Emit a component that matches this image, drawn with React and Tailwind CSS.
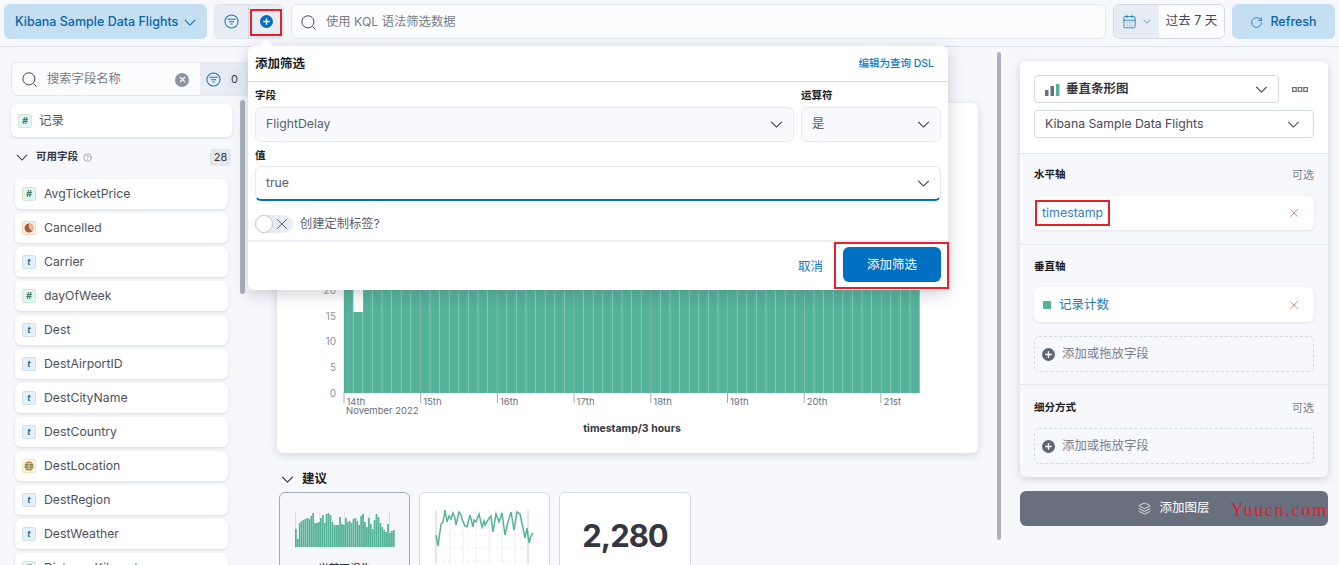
import React from "react"
import { RotateCw, CalendarDays, Layers, CircleHelp, X } from "lucide-react"

const font = { fontFamily: '"Inter", "Noto Sans CJK SC", sans-serif' }

const fields = [
  ["num", "AvgTicketPrice"],
  ["bool", "Cancelled"],
  ["text", "Carrier"],
  ["num", "dayOfWeek"],
  ["text", "Dest"],
  ["text", "DestAirportID"],
  ["text", "DestCityName"],
  ["text", "DestCountry"],
  ["geo", "DestLocation"],
  ["text", "DestRegion"],
  ["text", "DestWeather"],
  ["num", "DistanceKilometers"],
]

const thumbBars = [18, 8, 24, 26, 27, 28, 29, 28, 31, 34, 24, 24, 25, 29, 32, 24, 33, 34, 32, 25, 22, 22, 22, 30, 23, 22, 29, 25, 26, 24, 28, 29, 26, 22, 31, 33, 25, 20, 29, 23, 18, 27, 33, 30, 24, 20, 17, 15, 23, 14, 16, 17]
const linePts = [[436, 535], [438, 546], [441, 524], [443, 522], [445, 510], [447, 522], [449, 516], [451, 519], [453, 513], [455, 518], [456, 525], [458, 516], [459, 512], [461, 515], [462, 519], [465, 526], [467, 527], [470, 515], [473, 527], [474, 520], [476, 522], [479, 514], [482, 527], [484, 521], [485, 525], [488, 520], [491, 516], [493, 532], [496, 514], [499, 522], [502, 513], [505, 535], [508, 522], [511, 512], [514, 530], [517, 512], [520, 514], [523, 528], [525, 538], [527, 528], [529, 543], [531, 536], [533, 533]]

function Chev({ className }) {
  return (
    <svg viewBox="0 0 14 8" fill="none" stroke="currentColor" strokeWidth="1.2" className={className}>
      <path d="M1 1l6 6 6-6" />
    </svg>
  )
}

function FilterIcon({ className }) {
  return (
    <svg viewBox="0 0 16 16" fill="none" stroke="currentColor" className={className}>
      <circle cx="8" cy="8" r="7" strokeWidth="1.1" />
      <path d="M3.6 5.7h8.8M5.3 8.2h5.4M6.9 10.7h2.2" strokeWidth="1.1" />
    </svg>
  )
}

function SearchIcon() {
  return (
    <svg viewBox="0 0 16 16" fill="none" stroke="#343741" strokeWidth="1" className="w-[15px] h-[15px] shrink-0">
      <path d="M11.6 12.1A6.4 6.4 0 1 1 12.2 11.5" />
      <path d="M12.2 12.2L15.5 15.5" />
    </svg>
  )
}

function PlusCircle({ className, color }) {
  return (
    <svg viewBox="0 0 14 14" className={className}>
      <circle cx="7" cy="7" r="7" fill={color} />
      <path d="M7 3.5v7M3.5 7h7" stroke="#fff" strokeWidth="1.5" />
    </svg>
  )
}

function TypeBadge({ type }) {
  if (type === "num") {
    return <span className="w-[14px] h-[14px] shrink-0 rounded-[2px] bg-[#e6f3ef] border border-[#cfe8df] flex items-center justify-center text-[9px] font-bold italic text-[#2f7e68]">#</span>
  }
  if (type === "bool") {
    return (
      <span className="w-[14px] h-[14px] shrink-0 rounded-[2px] bg-[#fbeee5] border border-[#f4d9c6] flex items-center justify-center">
        <svg viewBox="0 0 10 10" className="w-[10px] h-[10px]">
          <circle cx="5" cy="5" r="4.5" fill="#a5612f" />
          <path d="M8.2 1.8A4.5 4.5 0 0 1 5 9.5 L5 5 Z" fill="#e2bb9c" transform="rotate(-45 5 5)" />
        </svg>
      </span>
    )
  }
  if (type === "geo") {
    return (
      <span className="w-[14px] h-[14px] shrink-0 rounded-[2px] bg-[#fbf5df] border border-[#f3e8bd] flex items-center justify-center">
        <svg viewBox="0 0 10 10" className="w-[10px] h-[10px]">
          <circle cx="5" cy="5" r="4.5" fill="#8a7a3a" />
          <path d="M0.5 5h9M5 .5v9M1.5 2.6h7M1.5 7.4h7" stroke="#f3e8bd" strokeWidth=".7" />
        </svg>
      </span>
    )
  }
  return <span className="w-[14px] h-[14px] shrink-0 rounded-[2px] bg-[#e6f0f8] border border-[#cfe0ef] flex items-center justify-center text-[9px] font-bold italic text-[#356a94]">t</span>
}

function Chart() {
  const bars = Array.from({ length: 60 }, (_, i) => i)
  const days = ["14th", "15th", "16th", "17th", "18th", "19th", "20th", "21st"]
  const yLabels = [[0, 290], [5, 264], [10, 238], [15, 213], [20, 187]]
  return (
    <svg viewBox="0 0 701 350" className="w-[701px] h-[350px] block">
      <rect x={67} y={150} width={576} height={59} fill="#54b399" fillOpacity={0.6} />
      <rect x={67} y={209} width={576} height={81} fill="#54b399" fillOpacity={0.6} />
      <rect x={76.6} y={150} width={9.6} height={59} fill="#fff" />
      {bars.map(i => (
        <rect key={i} x={67 + i * 9.6} y={i === 1 ? 209 : 150} width={8.8} height={i === 1 ? 81 : 140} fill="#54b399" />
      ))}
      {days.map((d, i) => (
        <g key={d}>
          <line x1={67 + i * 76.7} x2={67 + i * 76.7} y1={150} y2={290} stroke="#69707d" strokeOpacity={0.25} />
          <line x1={67 + i * 76.7} x2={67 + i * 76.7} y1={290} y2={300} stroke="#a5abb6" />
          <text x={69.5 + i * 76.7} y={302} fontSize="9.5" fill="#69707d">{d}</text>
        </g>
      ))}
      <text x={69} y={311} fontSize="9.5" fill="#69707d">November 2022</text>
      {yLabels.map(([v, y]) => (
        <text key={v} x={59} y={y + 3.5} fontSize="10" textAnchor="end" fill="#8a919e">{v}</text>
      ))}
      <text x={355} y={329} fontSize="10.5" fontWeight="700" textAnchor="middle" fill="#343741">timestamp/3 hours</text>
    </svg>
  )
}

function ThumbBars() {
  return (
    <svg viewBox="0 0 100 36" className="w-[100px] h-[36px] block">
      <line x1="0.5" x2="0.5" y1="0" y2="36" stroke="#d8dbe0" />
      <line x1="24.5" x2="24.5" y1="0" y2="36" stroke="#e6e8ec" />
      <line x1="49.5" x2="49.5" y1="0" y2="36" stroke="#e6e8ec" />
      <line x1="74.5" x2="74.5" y1="0" y2="36" stroke="#e6e8ec" />
      <line x1="94.5" x2="94.5" y1="0" y2="36" stroke="#d8dbe0" />
      {thumbBars.map((h, i) => (
        <rect key={i} x={i * 1.92} y={35 - h} width={1.75} height={h} fill="#54b399" />
      ))}
    </svg>
  )
}

function ThumbLine() {
  const pts = linePts.map(([x, y]) => `${x - 434},${y - 508}`).join(" ")
  return (
    <svg viewBox="0 0 102 56" className="w-[102px] h-[56px] block">
      {[2, 16, 29, 42, 55, 68, 81, 94].map(x => (
        <line key={x} x1={x} x2={x} y1="2" y2="56" stroke={x === 2 || x === 94 ? "#c9ccd2" : "#eceef1"} />
      ))}
      {[14, 27, 40, 53].map(y => (
        <line key={y} x1="2" x2="100" y1={y} y2={y} stroke="#eef0f3" strokeDasharray="3 3" />
      ))}
      <polyline points={pts} fill="none" stroke="#54b399" strokeWidth="1.5" />
    </svg>
  )
}

function AddField() {
  return (
    <div className="h-[36px] rounded-[5px] border border-dashed border-[#d3dae6] flex items-center gap-[7px] pl-[7px] text-[12.4px] text-[#7b818c]">
      <PlusCircle className="w-[13px] h-[13px]" color="#5f6673" />
      添加或拖放字段
    </div>
  )
}

function RemoveX() {
  return <X className="w-[14px] h-[14px] text-[#c9504a]" strokeWidth={1.1} />
}

export default function App() {
  return (
    <div style={font} className="relative w-[1339px] h-[565px] overflow-hidden bg-[#f7f8fc] text-[#343741]">
      {/* top bar */}
      <div className="h-[47px] border-b border-[#d9dfe9] flex items-start pt-[4px] pl-[4px] pr-[4px]">
        <button className="w-[203px] h-[35px] rounded-[6px] bg-[#c4dff2] flex items-center justify-between pt-px pl-[11px] pr-[11px] text-[12.5px] font-medium whitespace-nowrap text-[#0b64a8]">
          Kibana Sample Data Flights
          <Chev className="w-[12px] h-[7px]" />
        </button>
        <div className="ml-[7px] w-[70px] h-[35px] rounded-[6px] bg-[#e9edf3] border border-[#dfe4ec] flex">
          <div className="w-[34px] flex items-center justify-center border-r border-[#d3dae6] text-[#0f78c4]">
            <FilterIcon className="w-[15px] h-[15px]" />
          </div>
          <div className="relative flex-1 flex items-center justify-center">
            <PlusCircle className="w-[13px] h-[13px]" color="#0071c2" />
            <div className="absolute left-[1px] top-[4px] w-[32px] h-[27px] border-2 border-[#ea1f28]" />
          </div>
        </div>
        <div className="ml-[7px] w-[815px] h-[35px] rounded-[6px] bg-[#fbfcfd] border border-[#e4e8ef] flex items-center gap-[10px] pt-px pl-[9px] text-[12.3px] text-[#777d88]">
          <SearchIcon />
          使用 KQL 语法筛选数据
        </div>
        <div className="ml-[7px] w-[112px] h-[35px] rounded-[6px] border border-[#d3dae6] bg-[#fbfcfd] flex overflow-hidden">
          <div className="w-[45px] bg-[#e9edf3] flex items-center justify-center gap-[6px] text-[#0f78c4]">
            <CalendarDays className="w-[15px] h-[15px]" strokeWidth={1.3} />
            <Chev className="w-[8px] h-[5px]" />
          </div>
          <div className="flex-1 flex items-center justify-center text-[12.5px] text-[#454a55]">过去 7 天</div>
        </div>
        <button className="ml-[7px] w-[103px] h-[35px] rounded-[6px] bg-[#c4dff2] flex items-center justify-center gap-[7px] pt-px text-[12.5px] font-medium text-[#0b64a8]">
          <RotateCw className="w-[13px] h-[13px]" strokeWidth={1.4} />
          Refresh
        </button>
      </div>

      <div className="flex">
        {/* field list */}
        <div className="relative w-[248px] shrink-0 pt-[15px] pl-[11px]">
          <div className="h-[34px] w-[237px] rounded-l-[6px] bg-[#fbfcfd] border border-[#e4e8ef] flex items-center">
            <div className="w-[188px] flex items-center pt-px pl-[10px] pr-[11px] gap-[10px] text-[12.3px] text-[#777d88]">
              <SearchIcon />
              <span className="flex-1">搜索字段名称</span>
              <span className="w-[14px] h-[14px] rounded-full bg-[#8e949f] flex items-center justify-center">
                <X className="w-[9px] h-[9px] text-white" strokeWidth={3} />
              </span>
            </div>
            <div className="flex-1 h-full bg-[#e9edf3] flex items-center gap-[7px] pl-[6px] text-[#0f78c4]">
              <FilterIcon className="w-[15px] h-[15px]" />
              <span className="w-[13px] h-[17px] rounded-[3px] bg-[#e3e8f0] flex items-center justify-center text-[11px] text-[#343741]">0</span>
            </div>
          </div>
          <div className="mt-[8px] w-[221px] h-[33px] rounded-[6px] bg-white shadow-[0_1px_3px_rgba(60,70,90,0.16)] flex items-center gap-[7px] pt-px pl-[7px] text-[12.5px] text-[#555a65]">
            <TypeBadge type="num" />
            记录
          </div>
          <div className="mt-[3px] w-[220px] h-[34px] flex items-center pl-[5px] text-[10.5px] font-bold text-[#343741]">
            <Chev className="w-[12px] h-[7px] mr-[8px]" />
            可用字段
            <CircleHelp className="w-[9px] h-[9px] ml-[5px] text-[#69707d]" strokeWidth={1.5} />
            <span className="ml-auto w-[21px] h-[17px] rounded-[3px] bg-[#e3e8f0] flex items-center justify-center text-[11px] font-normal">28</span>
          </div>
          <div className="mt-[5px] flex flex-col gap-[4px] pl-[4px]">
            {fields.map(([type, name]) => (
              <div key={name} className="w-[213px] h-[30px] rounded-[6px] bg-white shadow-[0_1px_3px_rgba(60,70,90,0.16)] flex items-center gap-[8px] pl-[7px] text-[12.25px] text-[#4d525d]">
                <TypeBadge type={type} />
                {name}
              </div>
            ))}
          </div>
          <div className="absolute left-[240px] top-[53px] w-[5px] h-[194px] rounded-full bg-[#abb0b9]" />
        </div>

        {/* workspace */}
        <div className="relative w-[772px] shrink-0 pt-[56px] pl-[29px]">
          <div className="w-[701px] h-[350px] rounded-[6px] bg-white shadow-[0_2px_8px_rgba(60,70,90,0.2)]">
            <Chart />
          </div>
          <div className="mt-[19px] pl-[4px] flex items-center text-[12.5px] font-bold text-[#1a1c21] h-[15px]">
            <Chev className="w-[13px] h-[7px] mr-[8px]" />
            建议
          </div>
          <div className="mt-[5px] pl-[2px] flex gap-[9px]">
            <div className="w-[131px] h-[100px] rounded-[6px] bg-[#f6f7fb] border border-[#a3aab6] flex flex-col items-center pt-[19px]">
              <ThumbBars />
              <span className="mt-[13px] text-[10.5px] font-medium">当前可视化</span>
            </div>
            <div className="w-[131px] h-[100px] rounded-[6px] bg-white border border-[#d3dae6] flex justify-center pt-[15px]">
              <ThumbLine />
            </div>
            <div className="w-[132px] h-[100px] rounded-[6px] bg-white border border-[#d3dae6] flex justify-center pt-[20px] text-[31px] tracking-[-1px] leading-[46px] font-bold">
              2,280
            </div>
          </div>
          <div className="absolute left-[749px] top-[5px] w-[4px] h-[488px] rounded-full bg-[#abb0b9]" />
        </div>

        {/* layer panel */}
        <div className="w-[308px] shrink-0 pt-[14px]">
          <div className="rounded-[6px] bg-[#f7f8fc] shadow-[0_2px_8px_rgba(60,70,90,0.22)] overflow-hidden">
            <div className="h-[93px] bg-white border-b border-[#dfe4ec] pt-[14px] px-[14px]">
              <div className="flex items-center">
                <div className="w-[245px] h-[28px] rounded-[4px] border border-[#d3dae6] flex items-center pt-px pl-[10px] pr-[10px] text-[12.5px] font-semibold text-[#343741]">
                  <svg viewBox="0 0 15 12" className="w-[15px] h-[12px] mr-[6px]">
                    <rect x="0" y="6" width="3.5" height="6" fill="#69707d" />
                    <rect x="5.5" y="2" width="3.5" height="10" fill="#69707d" />
                    <rect x="11" y="0" width="3.5" height="12" fill="#54b399" />
                  </svg>
                  垂直条形图
                  <Chev className="ml-auto w-[13px] h-[7px]" />
                </div>
                <svg viewBox="0 0 16 5" className="ml-[13px] w-[16px] h-[5px]">
                  <rect x=".6" y=".6" width="3.6" height="3.8" fill="none" stroke="#69707d" strokeWidth="1.2" />
                  <rect x="6.2" y=".6" width="3.6" height="3.8" fill="none" stroke="#69707d" strokeWidth="1.2" />
                  <rect x="11.8" y=".6" width="3.6" height="3.8" fill="none" stroke="#69707d" strokeWidth="1.2" />
                </svg>
              </div>
              <div className="mt-[7px] w-[280px] h-[28px] rounded-[4px] border border-[#d3dae6] flex items-center pt-px pl-[10px] pr-[13px] text-[12.25px] text-[#454a55]">
                Kibana Sample Data Flights
                <Chev className="ml-auto w-[13px] h-[7px]" />
              </div>
            </div>
            <div className="h-[91px] border-b border-[#e3e7ee] px-[14px] pt-[13px]">
              <div className="flex justify-between items-center h-[16px] text-[10.5px] font-bold text-[#1a1c21]">
                水平轴
                <span className="font-normal text-[11px] text-[#7b818c]">可选</span>
              </div>
              <div className="mt-[13px] h-[34px] w-[280px] rounded-[6px] bg-white shadow-[0_1px_3px_rgba(60,70,90,0.12)] flex items-center justify-between pr-[13px]">
                <span className="ml-[1px] h-[26px] border-2 border-[#ea1f28] px-[5px] flex items-center text-[12.4px] text-[#2f7fc4]">timestamp</span>
                <RemoveX />
              </div>
            </div>
            <div className="h-[140px] border-b border-[#e3e7ee] px-[14px] pt-[14px]">
              <div className="flex items-center h-[16px] text-[10.5px] font-bold text-[#1a1c21]">垂直轴</div>
              <div className="mt-[12px] h-[35px] w-[280px] rounded-[6px] bg-white shadow-[0_1px_3px_rgba(60,70,90,0.12)] flex items-center pl-[9px] pr-[13px] text-[12.5px] text-[#1f78bd]">
                <span className="w-[8px] h-[8px] rounded-[1px] bg-[#54b399] mr-[8px]" />
                <span className="pt-px">记录计数</span>
                <span className="ml-auto"><RemoveX /></span>
              </div>
              <div className="mt-[14px] w-[280px]"><AddField /></div>
            </div>
            <div className="h-[92px] px-[14px] pt-[15px]">
              <div className="flex justify-between items-center h-[16px] text-[10.5px] font-bold text-[#1a1c21]">
                细分方式
                <span className="font-normal text-[11px] text-[#7b818c]">可选</span>
              </div>
              <div className="mt-[12px] w-[280px]"><AddField /></div>
            </div>
          </div>
          <button className="relative mt-[14px] w-[308px] h-[35px] rounded-[6px] bg-[#69707d] flex items-center justify-center gap-[8px] text-[12.5px] text-white">
            <Layers className="w-[13px] h-[13px]" strokeWidth={1.4} />
            添加图层
            <span style={{ fontFamily: '"Liberation Serif", serif' }} className="absolute right-0 top-[9px] text-[18px] leading-[20px] tracking-[1.75px] text-[#f0142d]">Yuucn.com</span>
          </button>
        </div>
      </div>

      {/* add filter popover */}
      <div className="absolute left-[248px] top-[46px] w-[700px] h-[244px] rounded-[6px] bg-white shadow-[0_4px_16px_rgba(60,70,90,0.25)]">
        <div className="absolute left-[13px] -top-[5px] w-[10px] h-[10px] rotate-45 bg-white" />
        <div className="h-[36px] border-b border-[#d3dae6] flex items-center justify-between pt-px pl-[7px] pr-[14px]">
          <span className="text-[12.5px] font-bold text-[#1a1c21]">添加筛选</span>
          <span className="text-[10.5px] font-medium text-[#0f78c4]">编辑为查询 DSL</span>
        </div>
        <div className="px-[7px] pt-[5px]">
          <div className="flex gap-[7px]">
            <div className="w-[539px]">
              <div className="h-[17px] mb-[3px] flex items-center text-[10.5px] font-semibold text-[#1a1c21]">字段</div>
              <div className="h-[35px] rounded-[6px] bg-[#f9fafd] border border-[#e6eaf1] flex items-center justify-between pl-[10px] pr-[10px] text-[12.25px] text-[#5a5f6a]">
                FlightDelay
                <Chev className="w-[13px] h-[7px] text-[#343741]" />
              </div>
            </div>
            <div className="w-[140px]">
              <div className="h-[17px] mb-[3px] flex items-center text-[10.5px] font-semibold text-[#1a1c21]">运算符</div>
              <div className="h-[35px] rounded-[6px] bg-[#f9fafd] border border-[#e6eaf1] flex items-center justify-between px-[10px] text-[12.25px] text-[#5a5f6a]">
                是
                <Chev className="w-[13px] h-[7px] text-[#343741]" />
              </div>
            </div>
          </div>
          <div className="mt-[5px] mb-[2px] h-[17px] flex items-center text-[10.5px] font-semibold text-[#1a1c21]">值</div>
          <div className="h-[35px] w-[686px] rounded-[6px] bg-white border border-[#e6eaf1] border-b-2 border-b-[#0071c2] flex items-center justify-between pt-px px-[10px] text-[12.25px] text-[#5a5f6a]">
            true
            <Chev className="w-[13px] h-[7px] text-[#343741]" />
          </div>
          <div className="mt-[14px] flex items-center gap-[7px] text-[12.25px] text-[#5a5f6a]">
            <span className="relative w-[38px] h-[18px] rounded-full bg-[#e9edf3] flex items-center justify-end pr-[2px]">
              <span className="absolute left-0 top-0 w-[18px] h-[18px] rounded-full bg-white border border-[#c3c8d1]" />
              <X className="w-[18px] h-[18px] text-[#343741]" strokeWidth={1} />
            </span>
            创建定制标签?
          </div>
        </div>
        <div className="mt-[7px] border-t-2 border-[#eef1f5] h-[49px] flex items-start justify-end">
          <span className="mt-[16px] mr-[11px] text-[12.5px] text-[#0f78c4]">取消</span>
          <div className="-mr-px h-[47px] border-2 border-[#ea1f28] pl-[7px] pr-[6px] pt-[3px]">
            <button className="w-[98px] h-[35px] rounded-[6px] bg-[#0071c2] text-[12.5px] font-normal text-white">添加筛选</button>
          </div>
        </div>
      </div>
    </div>
  )
}
